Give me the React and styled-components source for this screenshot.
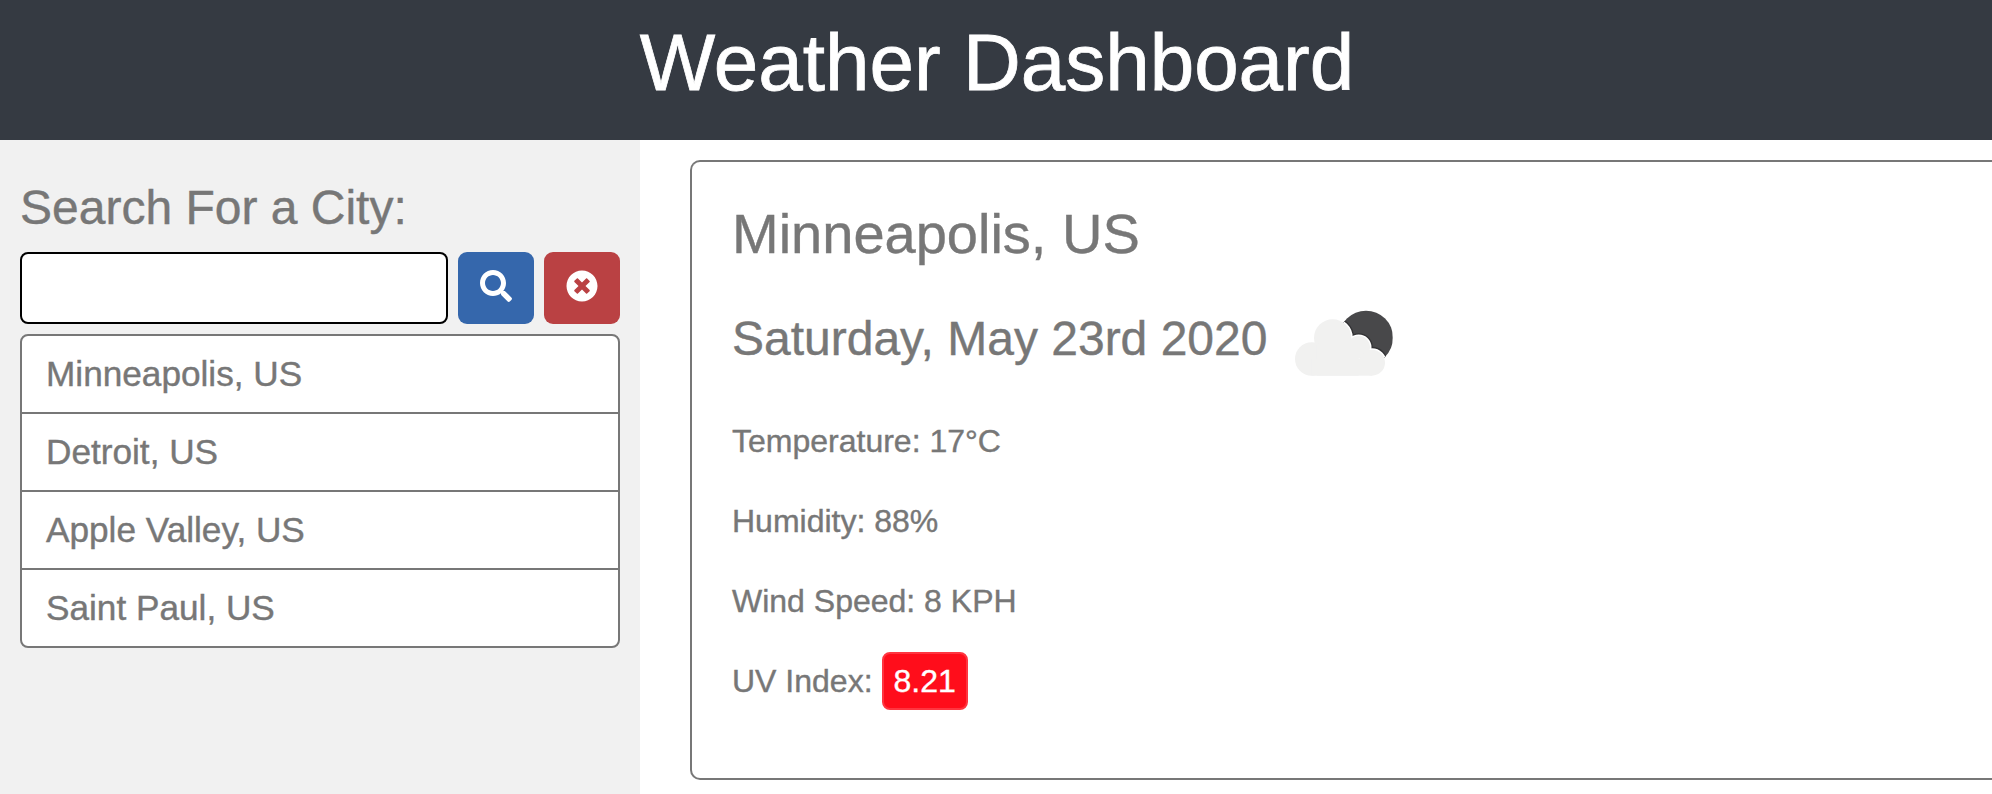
import React from "react";
import styled, { createGlobalStyle } from "styled-components";
import { FaSearch, FaTimesCircle } from "react-icons/fa";

const GlobalStyle = createGlobalStyle`
  *, *::before, *::after { box-sizing: border-box; }
  html, body { margin: 0; padding: 0; }
  body {
    width: 100%;
    height: 794px;
    overflow: hidden;
    background: #ffffff;
    color: #777777;
    font-family: "Liberation Sans", Arial, sans-serif;
    -webkit-text-stroke: 0.4px currentColor;
  }
`;

const Page = styled.div`
  display: flex;
  flex-direction: column;
  height: 794px;
  overflow: hidden;
`;

const Header = styled.header`
  flex: none;
  height: 140px;
  padding: 15px 0 0 2px;
  background: #353a42;
  color: #ffffff;
  text-align: center;
`;

const Title = styled.h1`
  margin: 0;
  font-size: 80px;
  font-weight: 400;
  line-height: 96px;
  -webkit-text-stroke: 0.8px currentColor;
`;

const Body = styled.div`
  flex: 1;
  display: flex;
  min-height: 0;
`;

const Sidebar = styled.aside`
  flex: none;
  width: 640px;
  padding: 39px 20px 0;
  background: #f1f1f1;
`;

const SearchLabel = styled.h2`
  margin: 0 0 15px;
  font-size: 48px;
  font-weight: 400;
  line-height: 58px;
`;

const SearchForm = styled.form`
  display: flex;
  gap: 10px;
  margin: 0 0 10px;
`;

const SearchInput = styled.input`
  flex: 1;
  min-width: 0;
  height: 72px;
  padding: 0 20px;
  border: 2px solid #000000;
  border-radius: 8px;
  outline: none;
  background: #ffffff;
  color: inherit;
  font: inherit;
  font-size: 36px;
`;

const IconButton = styled.button`
  display: flex;
  align-items: center;
  justify-content: center;
  width: 76px;
  height: 72px;
  padding: 0 0 4px;
  border: 0;
  border-radius: 9px;
  background: ${(p) => p.$color};
  color: #ffffff;
  font-size: 32px;
`;

const CityList = styled.ul`
  margin: 0;
  padding: 0;
  list-style: none;
  border: 2px solid #777777;
  border-radius: 8px;
  background: #ffffff;
`;

const CityItem = styled.li`
  padding: 0 24px;
  font-size: 35.2px;
  line-height: 76px;

  & + & {
    border-top: 2px solid #777777;
  }
`;

const Main = styled.main`
  flex: 1;
  min-width: 0;
  padding: 20px 0 0 50px;
`;

const Card = styled.section`
  height: 620px;
  padding: 38px 0 0 40px;
  border: 2px solid #777777;
  border-right: 0;
  border-radius: 10px 0 0 10px;
  background: #ffffff;
`;

const City = styled.h2`
  margin: 0 0 21px;
  font-size: 56px;
  font-weight: 400;
  line-height: 68px;
`;

const DateRow = styled.div`
  display: flex;
  align-items: center;
  gap: 13px;
  height: 100px;
  margin-bottom: 28px;
`;

const DateText = styled.h3`
  margin: 0;
  font-size: 48px;
  font-weight: 400;
  line-height: 58px;
  white-space: nowrap;
`;

const WeatherIcon = styled.svg`
  flex: none;
  width: 130px;
  height: 100px;
  margin-top: 1px;
`;

const Readings = styled.div`
  display: flex;
  flex-direction: column;
  gap: 32px;
`;

const Reading = styled.div`
  display: flex;
  align-items: center;
  gap: 9px;
  height: 48px;
  font-size: 32px;
  line-height: 48px;
`;

const UvBadge = styled.span`
  flex: none;
  height: 58px;
  padding: 0 10px;
  border: 2px solid #ff3540;
  border-radius: 8px;
  background: #ff0d1b;
  color: #ffffff;
  line-height: 54px;
`;

const cities = ["Minneapolis, US", "Detroit, US", "Apple Valley, US", "Saint Paul, US"];

function CloudShape(props) {
  return (
    <g {...props}>
      <circle cx="158" cy="144" r="56" />
      <circle cx="95" cy="207" r="50" />
      <circle cx="236" cy="172" r="34" />
      <circle cx="276" cy="218" r="39" />
      <rect x="110" y="165" width="126" height="92" />
      <rect x="95" y="207" width="181" height="50" />
    </g>
  );
}

function BrokenClouds() {
  return (
    <WeatherIcon viewBox="0 0 390 300" aria-hidden="true">
      <defs>
        <clipPath id="moon">
          <circle cx="258" cy="143" r="81" />
        </clipPath>
      </defs>
      <g clipPath="url(#moon)">
        <rect x="170" y="60" width="168" height="170" fill="#48484a" />
        <CloudShape fill="#333335" stroke="#333335" strokeWidth="17" />
        <CloudShape fill="#ffffff" stroke="#ffffff" strokeWidth="9" />
      </g>
      <CloudShape fill="#f1f1f0" />
    </WeatherIcon>
  );
}

export default function App() {
  return (
    <Page>
      <GlobalStyle />
      <Header>
        <Title>Weather Dashboard</Title>
      </Header>
      <Body>
        <Sidebar>
          <SearchLabel>Search For a City:</SearchLabel>
          <SearchForm onSubmit={(e) => e.preventDefault()}>
            <SearchInput type="text" aria-label="City" />
            <IconButton type="submit" $color="#3567ac" aria-label="Search">
              <FaSearch />
            </IconButton>
            <IconButton type="button" $color="#ba4143" aria-label="Clear">
              <FaTimesCircle />
            </IconButton>
          </SearchForm>
          <CityList>
            {cities.map((city) => (
              <CityItem key={city}>{city}</CityItem>
            ))}
          </CityList>
        </Sidebar>
        <Main>
          <Card>
            <City>Minneapolis, US</City>
            <DateRow>
              <DateText>Saturday, May 23rd 2020</DateText>
              <BrokenClouds />
            </DateRow>
            <Readings>
              <Reading>Temperature: 17°C</Reading>
              <Reading>Humidity: 88%</Reading>
              <Reading>Wind Speed: 8 KPH</Reading>
              <Reading>
                UV Index: <UvBadge>8.21</UvBadge>
              </Reading>
            </Readings>
          </Card>
        </Main>
      </Body>
    </Page>
  );
}
